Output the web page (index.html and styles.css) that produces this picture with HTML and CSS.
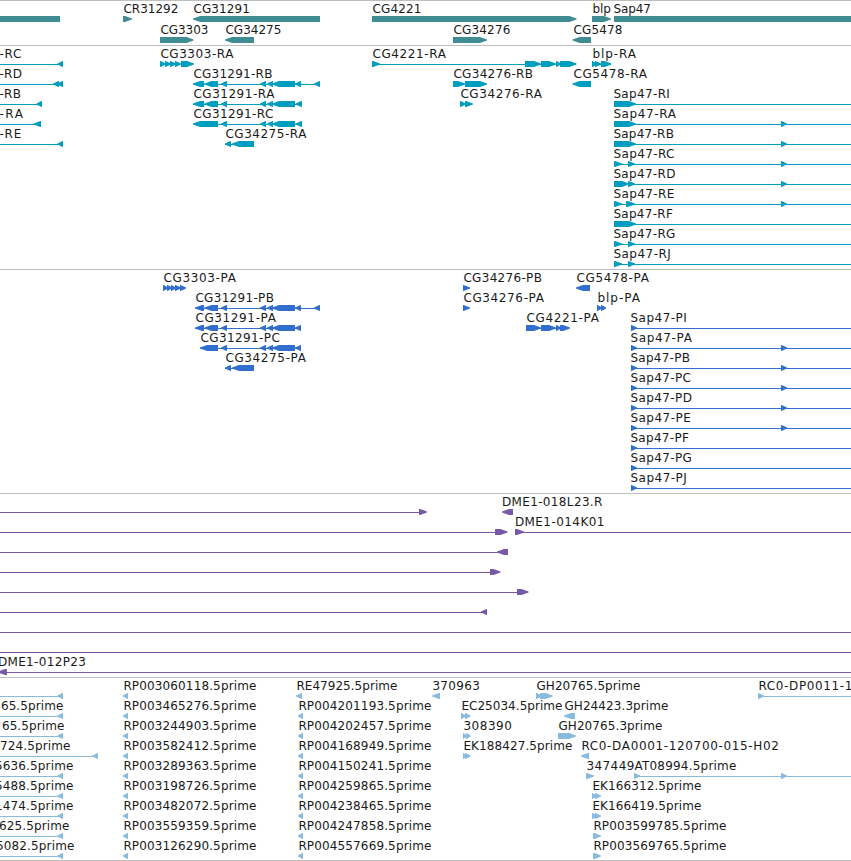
FILE: index.html
```html
<!DOCTYPE html>
<html lang="en">
<head>
<meta charset="utf-8">
<title>Genome browser</title>
<link rel="stylesheet" href="styles.css">
</head>
<body>
<main class="browser" id="browser"></main>
<script src="tracks.js"></script>
</body>
</html>
```
FILE: styles.css
```css
body {
  margin: 0;
  background: #fff;
  overflow: hidden;
}

.browser {
  display: flex;
  flex-direction: column;
  width: 851px;
  border-bottom: 1px solid #bebebe;
}

.track {
  display: flex;
  flex-direction: column;
  border-top: 1px solid #bebebe;
  padding-bottom: 3px;
}

.row {
  display: block;
  width: 851px;
  height: 20px;
  overflow: visible;
  fill: currentColor;
}

.genes { color: #3f8d92; padding-bottom: 2px; }
.genes .row { height: 21px; }
.transcripts { color: #009ebe; }
.proteins { color: #326ecd; }
.clones { color: #7759a8; }
.ests { color: #88bbdd; padding-bottom: 2px; }

.label {
  font-family: "DejaVu Sans", sans-serif;
  font-size: 12px;
  fill: #1a1a1a;
}
```
FILE: tracks.js
```js
// Each row is [features, labels].
// Features: "a-b" intron line, "a=b" block, "a>b" forward exon, "a<b" reverse exon.
// Labels: [start, end, text].
const ex = '204.5<218 221<227 260<266 267<273 272<295';
const est = (n, a, b) => [[123, 256, 'RP003' + a + '.5prime'], [298, 431, 'RP004' + b + '.5prime']];
const estShapes = '0-63 57.5<63 123<128 298<303 ';

const tracks = [
  ['genes', [
    ['0=60 123>132 193<320 372>576.5 592>611 614=851',
      [[123, 178, 'CR31292'], [193, 249.5, 'CG31291'], [372, 421, 'CG4221'], [592, 610.5, 'blp'], [613, 650.5, 'Sap47']]],
    ['160>193.5 225<254 453>487 572.5<591',
      [[160, 208, 'CG3303'], [225, 281, 'CG34275'], [453, 510, 'CG34276'], [573, 622, 'CG5478']]]
  ]],
  ['transcripts', [
    ['0-63 57.5<63 160>166 165>171 170>176 175>181 181>194 372-560 372>380 525>541 541>556 556>561 560>576.5 592-603 592>597 595>601 601>611.5',
      [[-1, 21, '-RC'], [160, 233, 'CG3303-RA'], [372, 445.5, 'CG4221-RA'], [592, 635.5, 'blp-RA']]],
    ['0-63 53<59 57<63 193-320 193<204 ' + ex + ' 295<301 314<320 453>465 465>487 572.5<591',
      [[-1, 21.5, '-RD'], [193, 272, 'CG31291-RB'], [453, 532.5, 'CG34276-RB'], [573, 646.5, 'CG5478-RA']]],
    ['0-40 36.5<42 193-302 193<204 ' + ex + ' 295.5<302 460>466 465>473 614>636 630-851',
      [[-1, 20.5, '-RB'], [193, 274, 'CG31291-RA'], [460, 541.5, 'CG34276-RA'], [613, 669.5, 'Sap47-RI']]],
    ['0-40 33.5<41 193-302 193<206 ' + ex.replace('204.5', '198') + ' 295.5<302 614>636 630-851 781>787',
      [[-1, 22.5, '-RA'], [193, 273, 'CG31291-RC'], [613, 675.5, 'Sap47-RA']]],
    ['0-63 57.5<63 225-240 225<231 232<254 614>636 630-851 781>787',
      [[-1, 21, '-RE'], [225, 306, 'CG34275-RA'], [613, 673.5, 'Sap47-RB']]],
    ['614-851 614>622 628>635 781>787', [[613, 674, 'Sap47-RC']]],
    ['614-851 614>629 628>635 781>787', [[613, 675, 'Sap47-RD']]],
    ['614-851 614>622 626>635 781>787', [[613, 674, 'Sap47-RE']]],
    ['630-851 614>636', [[613, 672.5, 'Sap47-RF']]],
    ['614-851 614>622 628>635', [[613, 675, 'Sap47-RG']]],
    ['614-851 614>622 628>635', [[613, 670.5, 'Sap47-RJ']]]
  ]],
  ['proteins', [
    ['163>168 167>172 171>176 175>181 180>186 463>470 576<590',
      [[163, 235.5, 'CG3303-PA'], [463, 541.5, 'CG34276-PB'], [576, 648.5, 'CG5478-PA']]],
    ['195-320 195<204 ' + ex + ' 295<301 314<320 463>470 597>602 601>606',
      [[195, 273.5, 'CG31291-PB'], [463, 543.5, 'CG34276-PA'], [597, 639.5, 'blp-PA']]],
    ['195-301 195<204 ' + ex + ' 295<301 526-562 526>541 541>556 556>561 560>570 631-851 631>637',
      [[195, 275.5, 'CG31291-PA'], [526, 598.5, 'CG4221-PA'], [630, 686.5, 'Sap47-PI']]],
    ['200-301 ' + ex.replace('204.5', '200') + ' 295<301 631-851 631>637 781>787',
      [[200, 279.5, 'CG31291-PC'], [630, 691.5, 'Sap47-PA']]],
    ['225-240 225<231 232<254 631-851 631>637 781>787',
      [[225, 305.5, 'CG34275-PA'], [630, 689.5, 'Sap47-PB']]],
    ['631-851 631>637 781>787', [[630, 690.5, 'Sap47-PC']]],
    ['631-851 631>637 781>787', [[630, 691.5, 'Sap47-PD']]],
    ['631-851 631>637 781>787', [[630, 690.5, 'Sap47-PE']]],
    ['631-851 631>637', [[630, 688.5, 'Sap47-PF']]],
    ['631-851 631>637', [[630, 691.5, 'Sap47-PG']]],
    ['631-851 631>637', [[630, 686.5, 'Sap47-PJ']]]
  ]],
  ['clones', [
    ['0-420 419>427 502<513', [[501.5, 602, 'DME1-018L23.R']]],
    ['0-496 495>507.5 515-851 515>524', [[514.5, 604, 'DME1-014K01']]],
    ['0-500 497<508', []],
    ['0-492 490>500.5', []],
    ['0-518 517>528.5', []],
    ['0-484 481<487', []],
    ['0-851', []],
    ['0-851', []],
    ['0-851 -2<7', [[-2.5, 85.5, 'DME1-012P23']]]
  ]],
  ['ests', [
    ['0-63 57.5<63 123<128 296<302 432<440 536>542 540>552.5 758-851 758>764',
      [[123, 256, 'RP003060118.5prime'], [296, 397, 'RE47925.5prime'], [432, 479.5, '370963'],
       [536, 640, 'GH20765.5prime'], [758, 852, 'RC0-DP0011-1']]],
    [estShapes + '461>466 465>470.5 564<575',
      [[0.5, 63, '65.5prime'], ...est(1, '465276', '201193'), [461, 562, 'EC25034.5prime'], [564, 668, 'GH24423.3prime']]],
    [estShapes + '463>467 466>470.5 558>576',
      [[1.5, 64, '65.5prime'], ...est(2, '244903', '202457'), [463, 511.5, '308390'], [558, 662, 'GH20765.3prime']]],
    ['0-98 92.5<98 123<128 298<303 463>466 465>470.5 581<589',
      [[-0.5, 70, '724.5prime'], ...est(3, '582412', '168949'), [463, 572, 'EK188427.5prime'],
       [581, 778.5, 'RC0-DA0001-120700-015-H02']]],
    [estShapes + '586>594 634-851 634>640 781>787',
      [[-5.5, 73, '5636.5prime'], ...est(4, '289363', '150241'), [586, 634, '347449'], [634, 736, 'AT08994.5prime']]],
    [estShapes + '592>597 595>601',
      [[-5.5, 73, '5488.5prime'], ...est(5, '198726', '259865'), [592, 701, 'EK166312.5prime']]],
    [estShapes + '592>597 595>601',
      [[-5.5, 73, '1474.5prime'], ...est(6, '482072', '238465'), [592, 701, 'EK166419.5prime']]],
    [estShapes + '593>597 594>601',
      [[-1.5, 69, '625.5prime'], ...est(7, '559359', '247858'), [593, 726, 'RP003599785.5prime']]],
    [estShapes + '593>597 594>601',
      [[-4.5, 74, '5082.5prime'], ...est(8, '126290', '557669'), [593, 726, 'RP003569765.5prime']]]
  ]]
];

// Row geometry: label baseline at 12, glyphs from 15 to 21, introns at 18.
function shape(spec) {
  const m = spec.match(/^(-?[\d.]+)([-=<>])([\d.]+)$/);
  const a = +m[1], b = +m[3], kind = m[2];
  if (kind === '-') return `<rect x="${a}" y="18" width="${b - a}" height="1"/>`;
  if (kind === '=') return `<rect x="${a}" y="15" width="${b - a}" height="6"/>`;
  const head = Math.min(7, b - a - 0.5);
  const points = kind === '>'
    ? `${a},15 ${b - head},15 ${b},17.6 ${b},18.4 ${b - head},21 ${a},21`
    : `${b},15 ${a + head},15 ${a},17.6 ${a},18.4 ${a + head},21 ${b},21`;
  return `<polygon points="${points}"/>`;
}

function label([start, end, text]) {
  return `<text class="label" x="${start + 0.4}" y="12" textLength="${end - start}">${text}</text>`;
}

document.getElementById('browser').innerHTML = tracks.map(([name, rows]) =>
  `<section class="track ${name}">` + rows.map(([features, labels]) =>
    `<svg class="row">${features.trim().split(/\s+/).map(shape).join('')}${labels.map(label).join('')}</svg>`
  ).join('') + '</section>'
).join('');
```
